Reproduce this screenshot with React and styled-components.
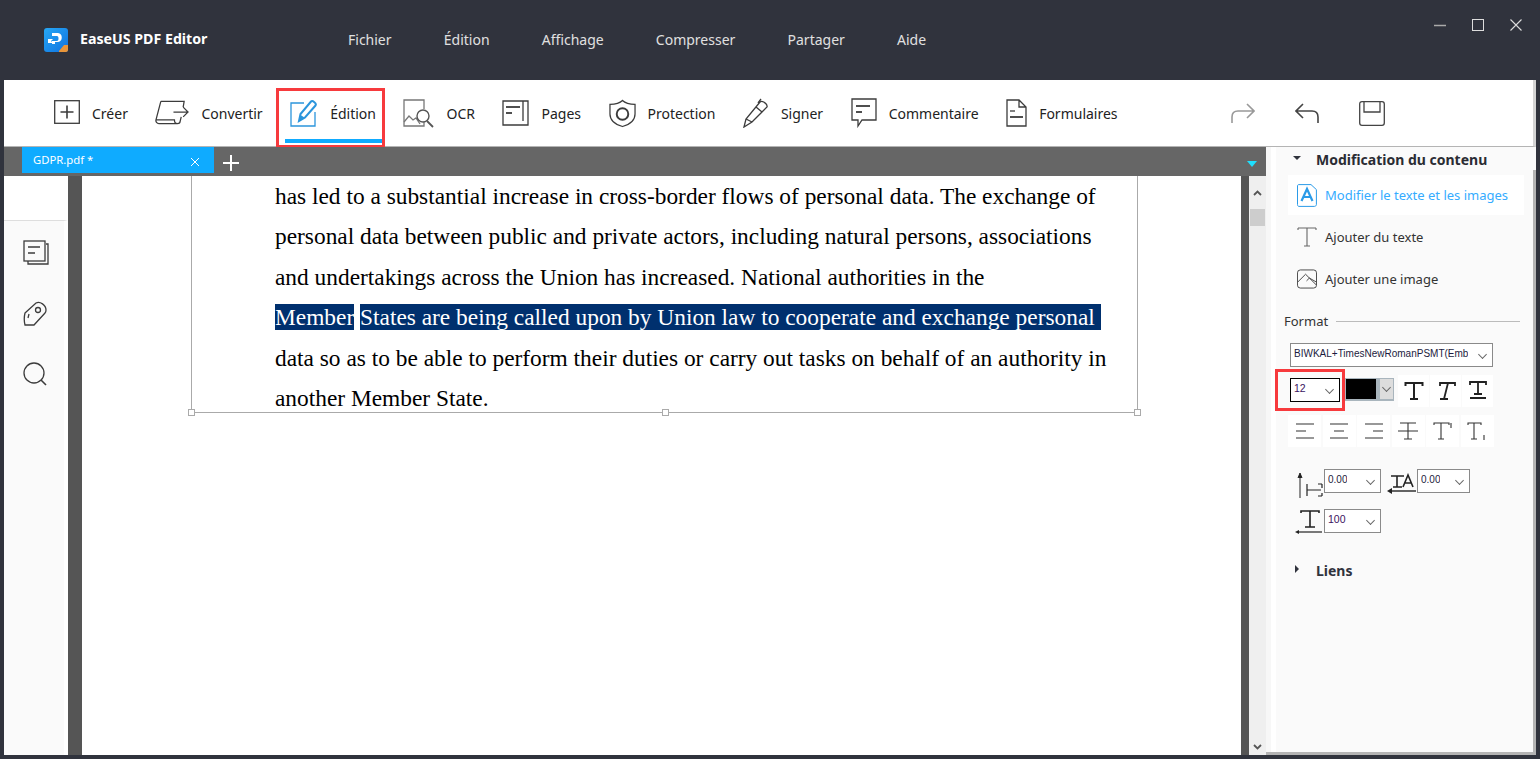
import React from 'react';
import styled, { createGlobalStyle } from 'styled-components';

const GlobalStyle = createGlobalStyle`
    html, body {
        margin: 0;
        padding: 0;
        height: 100%;
        overflow: hidden;
        background: #30333d;
    }
    * {
        box-sizing: border-box;
    }
`;

const uiFont = `'Noto Sans', 'Open Sans', sans-serif`;

const menuItems = ['Fichier', 'Édition', 'Affichage', 'Compresser', 'Partager', 'Aide'];

const stroke = { fill: 'none', stroke: '#3c3c3c', strokeWidth: 1.3 };

const CreateIcon = () => (
    <svg width="26" height="26" viewBox="0 0 26 26">
        <rect x="0.7" y="0.7" width="24.6" height="22.6" {...stroke} />
        <path d="M13 5.5v13M6.5 12h13" {...stroke} strokeWidth="1.6" />
    </svg>
);
const ConvertIcon = () => (
    <svg width="34" height="26" viewBox="0 0 35 26">
        <path d="M6 1h24l-1 6M6 1L1 20c-.5 2 1 4 3 4h19c-2 0-3-2-3-4H1M23 24c2 0 3-1 3-3l1-4" {...stroke} />
        <path d="M19 12h15M29 7l5 5-5 5" {...stroke} />
    </svg>
);
const EditIcon = () => (
    <svg width="28" height="28" viewBox="0 0 28 28">
        <path d="M14 4H1v23h24V13" fill="none" stroke="#2b95dc" strokeWidth="1.3" />
        <path d="M9 22l1.5-7L21 2.5c1.5-1.5 6 2 4.5 4L15 18.500z" fill="none" stroke="#2b95dc" strokeWidth="2" />
        <path d="M9 22l1.5-6 4 2.500z" fill="#2b95dc" />
    </svg>
);
const OcrIcon = () => (
    <svg width="31" height="29" viewBox="0 0 31 29">
        <path d="M21 10V1H1v26h20v-4" fill="none" stroke="#777" strokeWidth="1.3" />
        <path d="M1 23l5-6 4 4 3-2 4 6" fill="none" stroke="#777" strokeWidth="1.3" />
        <circle cx="20" cy="17" r="6" fill="none" stroke="#555" strokeWidth="1.4" />
        <path d="M24 22l6 6" fill="none" stroke="#555" strokeWidth="1.8" />
    </svg>
);
const PagesIcon = () => (
    <svg width="27" height="26" viewBox="0 0 27 26">
        <path d="M21 1H1v24h25V1h-5v20" {...stroke} />
        <path d="M4 7h14" {...stroke} strokeWidth="1.8" />
        <path d="M4 13h6" {...stroke} strokeWidth="1.8" />
    </svg>
);
const ShieldIcon = () => (
    <svg width="27" height="29" viewBox="0 0 28 29">
        <path d="M14 1c3 3 7 4 13 4v10c0 7-6 11-13 13C7 26 1 22 1 15V5c6 0 10-1 13-4z" {...stroke} />
        <circle cx="14" cy="15" r="6" {...stroke} strokeWidth="2" />
    </svg>
);
const SignIcon = () => (
    <svg width="26" height="30" viewBox="0 0 26 30">
        <path d="M1 29l2-8L17 4c2-2 8 2 7 5L9 24z" {...stroke} />
        <path d="M3 21l6 3M13 9l6 5M15 5l3-4" {...stroke} />
    </svg>
);
const CommentIcon = () => (
    <svg width="26" height="30" viewBox="0 0 26 30">
        <path d="M1 1h24v21H11l-4 6v-6H1z" {...stroke} />
        <path d="M5 8h14" {...stroke} strokeWidth="1.8" />
        <path d="M5 14h6" {...stroke} strokeWidth="1.8" />
    </svg>
);
const FormIcon = () => (
    <svg width="21" height="28" viewBox="0 0 21 28">
        <path d="M1 1h12l7 7v19H1zM13 1v7h7" {...stroke} />
        <path d="M4 12h5" {...stroke} />
        <path d="M4 18h13" {...stroke} strokeWidth="1.8" />
    </svg>
);

const toolItems = [
    { label: 'Créer', Icon: CreateIcon },
    { label: 'Convertir', Icon: ConvertIcon },
    { label: 'Édition', Icon: EditIcon, active: true },
    { label: 'OCR', Icon: OcrIcon },
    { label: 'Pages', Icon: PagesIcon },
    { label: 'Protection', Icon: ShieldIcon },
    { label: 'Signer', Icon: SignIcon },
    { label: 'Commentaire', Icon: CommentIcon },
    { label: 'Formulaires', Icon: FormIcon },
];

const lines = [
    'has led to a substantial increase in cross-border flows of personal data. The exchange of',
    'personal data between public and private actors, including natural persons, associations',
    'and undertakings across the Union has increased. National authorities in the',
];

const App = () => (
    <Window>
        <GlobalStyle />
        <TitleBar>
            <Brand>
                <svg width="24" height="24" viewBox="0 0 24 24">
                    <defs>
                        <linearGradient id="logoBlue" x1="0" y1="0" x2="1" y2="1">
                            <stop offset="0" stopColor="#27a8f5" />
                            <stop offset="1" stopColor="#0f72e0" />
                        </linearGradient>
                    </defs>
                    <rect width="24" height="24" rx="3" fill="url(#logoBlue)" />
                    <path d="M8 5h6c5 0 5 9 0 9h-3v2H8v-3h5c2 0 2-5 0-5H8z" fill="#fff" />
                    <path d="M4 11h5l-2 2 2 2H4z" fill="#fff" />
                    <path d="M15 23l5-6 4 0v5c0 1-1 2-2 2h-7z" fill="#e8953a" />
                </svg>
                <BrandName>EaseUS PDF Editor</BrandName>
            </Brand>
            <Menu>
                {menuItems.map((item) => (
                    <MenuItem key={item}>{item}</MenuItem>
                ))}
            </Menu>
            <WindowControls>
                <svg width="14" height="14" viewBox="0 0 14 14">
                    <path d="M1 7.500h12" stroke="#aaa" strokeWidth="1.5" />
                </svg>
                <svg width="14" height="14" viewBox="0 0 14 14">
                    <rect x="1.500" y="1.500" width="11" height="11" fill="none" stroke="#ddd" />
                </svg>
                <svg width="14" height="14" viewBox="0 0 14 14">
                    <path d="M1.500 1.500l11 11M12.500 1.500l-11 11" stroke="#ddd" strokeWidth="1.1" />
                </svg>
            </WindowControls>
        </TitleBar>

        <Toolbar>
            <Tools>
                {toolItems.map(({ label, Icon, active }) => (
                    <Tool key={label} $active={active}>
                        <Icon />
                        <span>{label}</span>
                    </Tool>
                ))}
            </Tools>
            <QuickActions>
                <svg width="24" height="22" viewBox="0 0 24 22">
                    <path d="M1 21v-6c0-4 2-6 6-6h16M16 2l7 7-7 7" fill="none" stroke="#999" strokeWidth="1.6" />
                </svg>
                <svg width="24" height="22" viewBox="0 0 24 22">
                    <path d="M23 21v-6c0-4-2-6-6-6H1M8 2L1 9l7 7" fill="none" stroke="#444" strokeWidth="1.6" />
                </svg>
                <svg width="26" height="25" viewBox="0 0 26 25">
                    <path d="M3 .7h20c1.500 0 2.300.8 2.300 2.300v19c0 1.500-.8 2.300-2.300 2.300H3c-1.500 0-2.300-.8-2.300-2.300V3C.7 1.500 1.500.7 3 .7z" fill="none" stroke="#444" strokeWidth="1.3" />
                    <path d="M5 1v10h16V1" fill="none" stroke="#444" strokeWidth="1.3" />
                </svg>
            </QuickActions>
        </Toolbar>

        <Workspace>
            <Main>
                <TabBar>
                    <Tab>
                        <span>GDPR.pdf *</span>
                        <svg width="10" height="10" viewBox="0 0 10 10">
                            <path d="M1 1l8 8M9 1l-8 8" stroke="#fff" />
                        </svg>
                    </Tab>
                    <svg width="16" height="16" viewBox="0 0 16 16">
                        <path d="M8 0v16M0 8h16" stroke="#fff" strokeWidth="2" />
                    </svg>
                    <TabMenuArrow />
                </TabBar>
                <Viewer>
                    <SideRail>
                        <RailTop />
                        <RailIcons>
                            <svg width="26" height="25" viewBox="0 0 26 25">
                                <path d="M23 4h2v20H5v-3" {...stroke} />
                                <rect x="1" y="1" width="21" height="20" {...stroke} />
                                <path d="M5 7h12M5 13h7" {...stroke} />
                            </svg>
                            <svg width="25" height="25" viewBox="0 0 25 25">
                                <path d="M2 12L13 2c4-2 10 2 10 7 0 1 0 2-1 3L11 24H2c-1-4-1-8 0-12z" {...stroke} />
                                <circle cx="15" cy="9" r="2.500" {...stroke} />
                                <path d="M6 13l-1 4" {...stroke} />
                            </svg>
                            <svg width="25" height="25" viewBox="0 0 25 25">
                                <circle cx="11" cy="11" r="10" {...stroke} />
                                <path d="M18 18l5 5" {...stroke} strokeWidth="1.600" />
                            </svg>
                        </RailIcons>
                    </SideRail>
                    <DarkStrip $width={14} />
                    <Page>
                        <TextBox>
                            {lines.map((line) => (
                                <TextLine key={line}>{line}</TextLine>
                            ))}
                            <TextLine>
                                <Selected>Member</Selected> <Selected>States are being called upon by Union law to cooperate and exchange personal&nbsp;</Selected>
                            </TextLine>
                            <TextLine>data so as to be able to perform their duties or carry out tasks on behalf of an authority in</TextLine>
                            <TextLine>another Member State.</TextLine>
                            <Handle $x="left" />
                            <Handle $x="center" />
                            <Handle $x="right" />
                        </TextBox>
                    </Page>
                    <DarkStrip $width={8} />
                    <ScrollTrack>
                        <ScrollArrow>
                            <svg width="9" height="6" viewBox="0 0 9 6">
                                <path d="M1 5l3.500-3.500L8 5" fill="none" stroke="#555" strokeWidth="1.800" />
                            </svg>
                        </ScrollArrow>
                        <ScrollThumb />
                        <ScrollArrow $bottom>
                            <svg width="9" height="6" viewBox="0 0 9 6">
                                <path d="M1 1l3.500 3.500L8 1" fill="none" stroke="#555" strokeWidth="1.800" />
                            </svg>
                        </ScrollArrow>
                    </ScrollTrack>
                </Viewer>
            </Main>

            <Panel>
                <SectionHead>
                    <TriangleDown />
                    <span>Modification du contenu</span>
                </SectionHead>
                <ActionList>
                    <Action $active>
                        <svg width="20" height="23" viewBox="0 0 20 23">
                            <path d="M2 .6h12l5.400 5v15c0 1-1 1.800-2 1.800H2c-1 0-1.500-.8-1.500-1.800V2C.5 1 1 .6 2 .6z" fill="none" stroke="#2b9be8" />
                            <path d="M4.500 17l5.500-12 5.500 12M7 13h6" fill="none" stroke="#2b9be8" strokeWidth="2.200" />
                        </svg>
                        <span>Modifier le texte et les images</span>
                    </Action>
                    <Action>
                        <svg width="20" height="20" viewBox="0 0 20 20">
                            <path d="M1 1h18M1 1v2M19 1v2M10 1v18M7 19h6" fill="none" stroke="#666" strokeWidth="1.100" />
                        </svg>
                        <span>Ajouter du texte</span>
                    </Action>
                    <Action>
                        <svg width="20" height="20" viewBox="0 0 21 20">
                            <rect x="0.500" y="0.500" width="20" height="19" rx="3" fill="none" stroke="#444" />
                            <path d="M1 13l8-8 11 11M10 12l3-3 7 4" fill="none" stroke="#444" />
                        </svg>
                        <span>Ajouter une image</span>
                    </Action>
                </ActionList>

                <FormatLabel>Format</FormatLabel>
                <FormatBlock>
                    <FontSelect $width={203}>
                        <SelectText $dark $size={10}>BIWKAL+TimesNewRomanPSMT(Emb</SelectText>
                        <Chevron />
                    </FontSelect>

                    <FormatRow>
                        <SizeWrap>
                            <FontSelect $width={50} $strong>
                                <SelectText>12</SelectText>
                                <Chevron />
                            </FontSelect>
                        </SizeWrap>
                        <ColorPicker>
                            <ColorSwatch />
                            <ColorDrop>
                                <Chevron />
                            </ColorDrop>
                        </ColorPicker>
                        <StyleGroup>
                            <StyleBtn $width={31}>
                                <svg width="20" height="20" viewBox="0 0 20 20">
                                    <path d="M1.500 5V2h17v3M10 2v16M6 18h8" fill="none" stroke="#222" strokeWidth="2" />
                                </svg>
                            </StyleBtn>
                            <StyleBtn $width={31}>
                                <svg width="20" height="20" viewBox="0 0 20 20">
                                    <path d="M4 5V2h15v3M12 2L8 18M4 18h8" fill="none" stroke="#222" strokeWidth="1.800" />
                                </svg>
                            </StyleBtn>
                            <StyleBtn $width={31}>
                                <svg width="20" height="20" viewBox="0 0 20 20">
                                    <path d="M2 4V1h16v3M10 1v12M6 13h8M2 17h16" fill="none" stroke="#222" strokeWidth="1.800" />
                                </svg>
                            </StyleBtn>
                        </StyleGroup>
                    </FormatRow>
                </FormatBlock>

                <AlignRow>
                    {[
                        'M1 3h18M1 10h10M1 17h18',
                        'M1 3h18M5 10h10M1 17h18',
                        'M1 3h18M9 10h10M1 17h18',
                        'M2 2h16M10 2v16M6 18h8M0 10h20',
                        'M1 4V2h15v2M8 2v16M5 18h6M18 2v5',
                        'M1 4V2h13v2M7 2v16M4 18h6M17 14v5',
                    ].map((d) => (
                        <StyleBtn key={d} $width={33}>
                            <svg width="20" height="20" viewBox="0 0 20 20">
                                <path d={d} fill="none" stroke="#333" strokeWidth="1.100" />
                            </svg>
                        </StyleBtn>
                    ))}
                </AlignRow>

                <SpacingRow>
                    <svg width="26" height="27" viewBox="0 0 26 27">
                        <path d="M3 26V3M1 6l2-5 2 5" fill="#222" stroke="#222" />
                        <path d="M10 12v12M10 18h14M21 12h4M21 24h4M25 12v4M25 21v3" fill="none" stroke="#222" strokeWidth="1.200" />
                    </svg>
                    <FontSelect $width={57}>
                        <SelectText $dark $size={10}>0.00</SelectText>
                        <Chevron />
                    </FontSelect>
                    <SpacingIcon>
                        <svg width="30" height="22" viewBox="0 0 30 22">
                            <path d="M4 3h13M10 3v11M6 14h9M16 14L21 2l5 12M18 10h6" fill="none" stroke="#222" strokeWidth="1.600" />
                            <path d="M3 18h26" stroke="#222" strokeWidth="1.400" />
                            <path d="M0 18l5-3v6z" fill="#222" />
                        </svg>
                    </SpacingIcon>
                    <FontSelect $width={53}>
                        <SelectText $dark $size={10}>0.00</SelectText>
                        <Chevron />
                    </FontSelect>
                </SpacingRow>
                <ScaleRow>
                    <svg width="27" height="25" viewBox="0 0 27 25">
                        <path d="M6 4V2h18v2M15 2v16M10 18h10" fill="none" stroke="#222" strokeWidth="1.600" />
                        <path d="M3 23h24" stroke="#222" strokeWidth="1.200" />
                        <path d="M0 23l4-2v4z" fill="#222" />
                    </svg>
                    <FontSelect $width={57}>
                        <SelectText>100</SelectText>
                        <Chevron />
                    </FontSelect>
                </ScaleRow>

                <LinksHead>
                    <TriangleRight />
                    <span>Liens</span>
                </LinksHead>
                <PanelEdgeRight />
                <PanelEdgeBottom />
            </Panel>
        </Workspace>
    </Window>
);

export default App;

/*--------------------------------------
------------Styled Components-----------
--------------------------------------*/
const Window = styled.div`
    width: 1540px;
    height: 759px;
    padding: 0 4px 4px;
    display: flex;
    flex-direction: column;
    background: #30333d;
    font-family: ${uiFont};
    overflow: hidden;
`;

const TitleBar = styled.header`
    height: 80px;
    flex: none;
    display: flex;
    align-items: center;
    padding-left: 40px;
    color: #e6e6e6;
`;

const Brand = styled.div`
    width: 304px;
    display: flex;
    align-items: center;
    gap: 12px;
    margin-top: -1px;
`;

const BrandName = styled.span`
    font-size: 14.200px;
    font-weight: 700;
    color: #fff;
    margin-top: -2px;
`;

const Menu = styled.nav`
    display: flex;
    gap: 52.200px;
    margin-top: -2px;
`;

const MenuItem = styled.span`
    font-size: 14px;
    color: #e0e0e0;
`;

const WindowControls = styled.div`
    margin-left: auto;
    margin-right: 13px;
    margin-top: -30px;
    display: flex;
    gap: 24px;
`;

const Toolbar = styled.div`
    height: 67px;
    flex: none;
    display: flex;
    align-items: center;
    padding-left: 50px;
    background: #fff;
    border-bottom: 1px solid #b4b4b4;
    border-right: 3px solid #d4d4d4;
`;

const Tools = styled.div`
    display: flex;
    align-items: center;
    gap: 27.500px;
`;

const Tool = styled.div`
    position: relative;
    display: flex;
    align-items: center;
    gap: 12px;
    font-size: 14px;
    color: #222;

    ${(p) =>
        p.$active &&
        `
        &::before {
            content: '';
            position: absolute;
            left: -5px;
            right: -6px;
            bottom: -16px;
            height: 4px;
            background: #0fabff;
        }
        &::after {
            content: '';
            position: absolute;
            left: -14px;
            right: -9px;
            top: -11px;
            bottom: -21px;
            border: 3px solid #f73a3d;
        }
    `}
`;

const QuickActions = styled.div`
    margin-left: 113.600px;
    display: flex;
    align-items: center;
    gap: 40px;
`;

const Workspace = styled.div`
    flex: 1;
    min-height: 0;
    display: flex;
`;

const Main = styled.div`
    width: 1262px;
    flex: none;
    display: flex;
    flex-direction: column;
`;

const TabBar = styled.div`
    position: relative;
    height: 29px;
    flex: none;
    display: flex;
    align-items: center;
    gap: 9px;
    padding-left: 18px;
    background: #666;

    > svg {
        margin-top: 2px;
    }
`;

const Tab = styled.div`
    width: 192px;
    height: 26px;
    margin-top: -3px;
    padding: 0 14px 0 11px;
    display: flex;
    align-items: center;
    justify-content: space-between;
    background: #0fabff;
    color: #fff;
    font-size: 11.300px;

    span {
        margin-top: -2px;
    }
    svg {
        margin-top: 4px;
    }
`;

const TabMenuArrow = styled.i`
    position: absolute;
    right: 9px;
    top: 14px;
    border-left: 5px solid transparent;
    border-right: 5px solid transparent;
    border-top: 6px solid #1fe0ff;
`;

const Viewer = styled.div`
    flex: 1;
    min-height: 0;
    display: flex;
`;

const SideRail = styled.aside`
    width: 64px;
    flex: none;
    display: flex;
    flex-direction: column;
    background: #fff;
`;

const RailTop = styled.div`
    height: 45px;
    flex: none;
    border-right: 4px solid #fff;
    border-bottom: 1px solid #dedede;
`;

const RailIcons = styled.div`
    flex: 1;
    margin-right: 4px;
    padding-top: 19px;
    padding-left: 19px;
    display: flex;
    flex-direction: column;
    gap: 36px;
    background: #fafafa;
`;

const DarkStrip = styled.div`
    width: ${(p) => p.$width}px;
    flex: none;
    background: #555;
`;

const Page = styled.main`
    flex: 1;
    min-width: 0;
    padding-left: 109px;
    background: #fff;
`;

const TextBox = styled.div`
    position: relative;
    width: 947px;
    height: 237px;
    padding-left: 83px;
    border: 1px solid #aaa;
    border-top: 0;
    font-family: 'Liberation Serif', 'Times New Roman', serif;
    font-size: 23.380px;
    color: #000;
    white-space: nowrap;
`;

const TextLine = styled.div`
    height: 40.400px;
    line-height: 40.400px;
`;

const Selected = styled.span`
    background: #00306e;
    color: #fff;
`;

const Handle = styled.i`
    position: absolute;
    width: 7px;
    height: 7px;
    bottom: -4px;
    background: #fff;
    border: 1px solid #aaa;
    ${(p) => p.$x === 'left' && 'left: -4px;'}
    ${(p) => p.$x === 'center' && 'left: 470px;'}
    ${(p) => p.$x === 'right' && 'right: -4px;'}
`;

const ScrollTrack = styled.div`
    width: 17px;
    flex: none;
    display: flex;
    flex-direction: column;
    background: #efefef;
`;

const ScrollArrow = styled.div`
    height: 17px;
    flex: none;
    display: flex;
    align-items: center;
    justify-content: center;
    margin-top: ${(p) => (p.$bottom ? 'auto' : '8px')};
`;

const ScrollThumb = styled.div`
    height: 17px;
    margin: 8px 1px 0;
    background: #cdcdcd;
`;

const Panel = styled.aside`
    position: relative;
    flex: 1;
    min-width: 0;
    padding: 0 0 0 18px;
    background: linear-gradient(to right, #f7f7f7 5px, #fff 5px, #fff 10px, #fafafa 10px);
`;

const SectionHead = styled.div`
    height: 25px;
    margin-left: -18px;
    padding-left: 27px;
    display: flex;
    align-items: center;
    gap: 15px;
    font-size: 14px;
    font-weight: 700;
    color: #2a2c33;
`;

const TriangleDown = styled.i`
    width: 0;
    height: 0;
    margin-top: -3px;
    border-left: 4px solid transparent;
    border-right: 4px solid transparent;
    border-top: 4px solid #30333d;
`;

const TriangleRight = styled.i`
    width: 0;
    height: 0;
    margin-top: -3px;
    border-top: 4px solid transparent;
    border-bottom: 4px solid transparent;
    border-left: 4px solid #30333d;
`;

const ActionList = styled.div`
    margin: 3px 0 0 4px;
    width: 236px;
    display: flex;
    flex-direction: column;
    gap: 2px;
`;

const Action = styled.div`
    height: 40px;
    padding-left: 9px;
    display: flex;
    align-items: center;
    font-size: 13px;
    color: ${(p) => (p.$active ? '#35acff' : '#333')};
    background: ${(p) => (p.$active ? '#fff' : 'transparent')};

    svg {
        flex: none;
    }
    span {
        margin-left: 8px;
    }
`;

const FormatLabel = styled.div`
    height: 20px;
    margin-top: 12px;
    width: 236px;
    display: flex;
    align-items: center;
    gap: 8px;
    font-size: 13px;
    color: #333;

    &::after {
        content: '';
        flex: 1;
        height: 1px;
        background: #bbb;
    }
`;

const FormatBlock = styled.div`
    margin: 12px 0 0 6px;
`;

const FontSelect = styled.div`
    width: ${(p) => p.$width}px;
    height: 24px;
    flex: none;
    padding: 0 6px 0 3px;
    display: flex;
    align-items: center;
    justify-content: space-between;
    background: #fff;
    border: 1px solid ${(p) => (p.$strong ? '#000' : '#8a8a8a')};
`;

const SelectText = styled.span`
    font-family: 'Liberation Sans', Arial, sans-serif;
    font-size: ${(p) => p.$size || 10.5}px;
    margin-top: -4px;
    color: ${(p) => (p.$dark ? '#1c1c40' : '#3a1460')};
    white-space: nowrap;
    overflow: hidden;
`;

const Chevron = styled.i`
    width: 7px;
    height: 7px;
    flex: none;
    margin-top: -2px;
    border-right: 1px solid #666;
    border-bottom: 1px solid #666;
    transform: rotate(45deg) scale(0.9);
`;

const FormatRow = styled.div`
    display: flex;
    align-items: center;
    gap: 5px;
    margin-top: 8px;
`;

const SizeWrap = styled.div`
    position: relative;
    margin-top: -2px;

    &::after {
        content: '';
        position: absolute;
        inset: -9px -5px -9px -15px;
        border: 3px solid #f73a3d;
        pointer-events: none;
    }
`;

const ColorPicker = styled.div`
    width: 49px;
    height: 23px;
    margin-top: -4px;
    display: flex;
    align-items: stretch;
    gap: 4px;
    padding: 1px 1px 2px;
    background: #a9b5bd;
`;

const ColorSwatch = styled.div`
    width: 30px;
    background: #000;
`;

const ColorDrop = styled.div`
    flex: 1;
    display: flex;
    align-items: center;
    justify-content: center;
    background: #ddd;
`;

const StyleGroup = styled.div`
    margin-left: -1px;
    display: flex;
    gap: 1px;
`;

const StyleBtn = styled.div`
    width: ${(p) => p.$width}px;
    height: 32px;
    display: flex;
    align-items: center;
    justify-content: center;
    background: #fff;
`;

const AlignRow = styled.div`
    margin-top: 8px;
    margin-left: 4px;
    display: flex;
    gap: 1.500px;
`;

const SpacingRow = styled.div`
    margin: 22px 0 0 13px;
    display: flex;
    align-items: flex-start;
    gap: 1px;

    > svg {
        margin-top: 3px;
    }
`;

const SpacingIcon = styled.div`
    margin: 4px -1px 0 5px;
`;

const ScaleRow = styled.div`
    margin: 9px 0 0 11px;
    display: flex;
    align-items: flex-start;
    gap: 2px;
`;

const LinksHead = styled.div`
    margin: 27px 0 0 11px;
    display: flex;
    align-items: center;
    gap: 17px;
    font-size: 14px;
    font-weight: 700;
    color: #30333d;
`;

const PanelEdgeRight = styled.div`
    position: absolute;
    top: 23px;
    bottom: 0;
    right: 0;
    width: 3px;
    background: #b4b4b4;
`;

const PanelEdgeBottom = styled.div`
    position: absolute;
    left: 0;
    right: 0;
    bottom: 0;
    height: 3px;
    background: #b4b4b4;
`;
